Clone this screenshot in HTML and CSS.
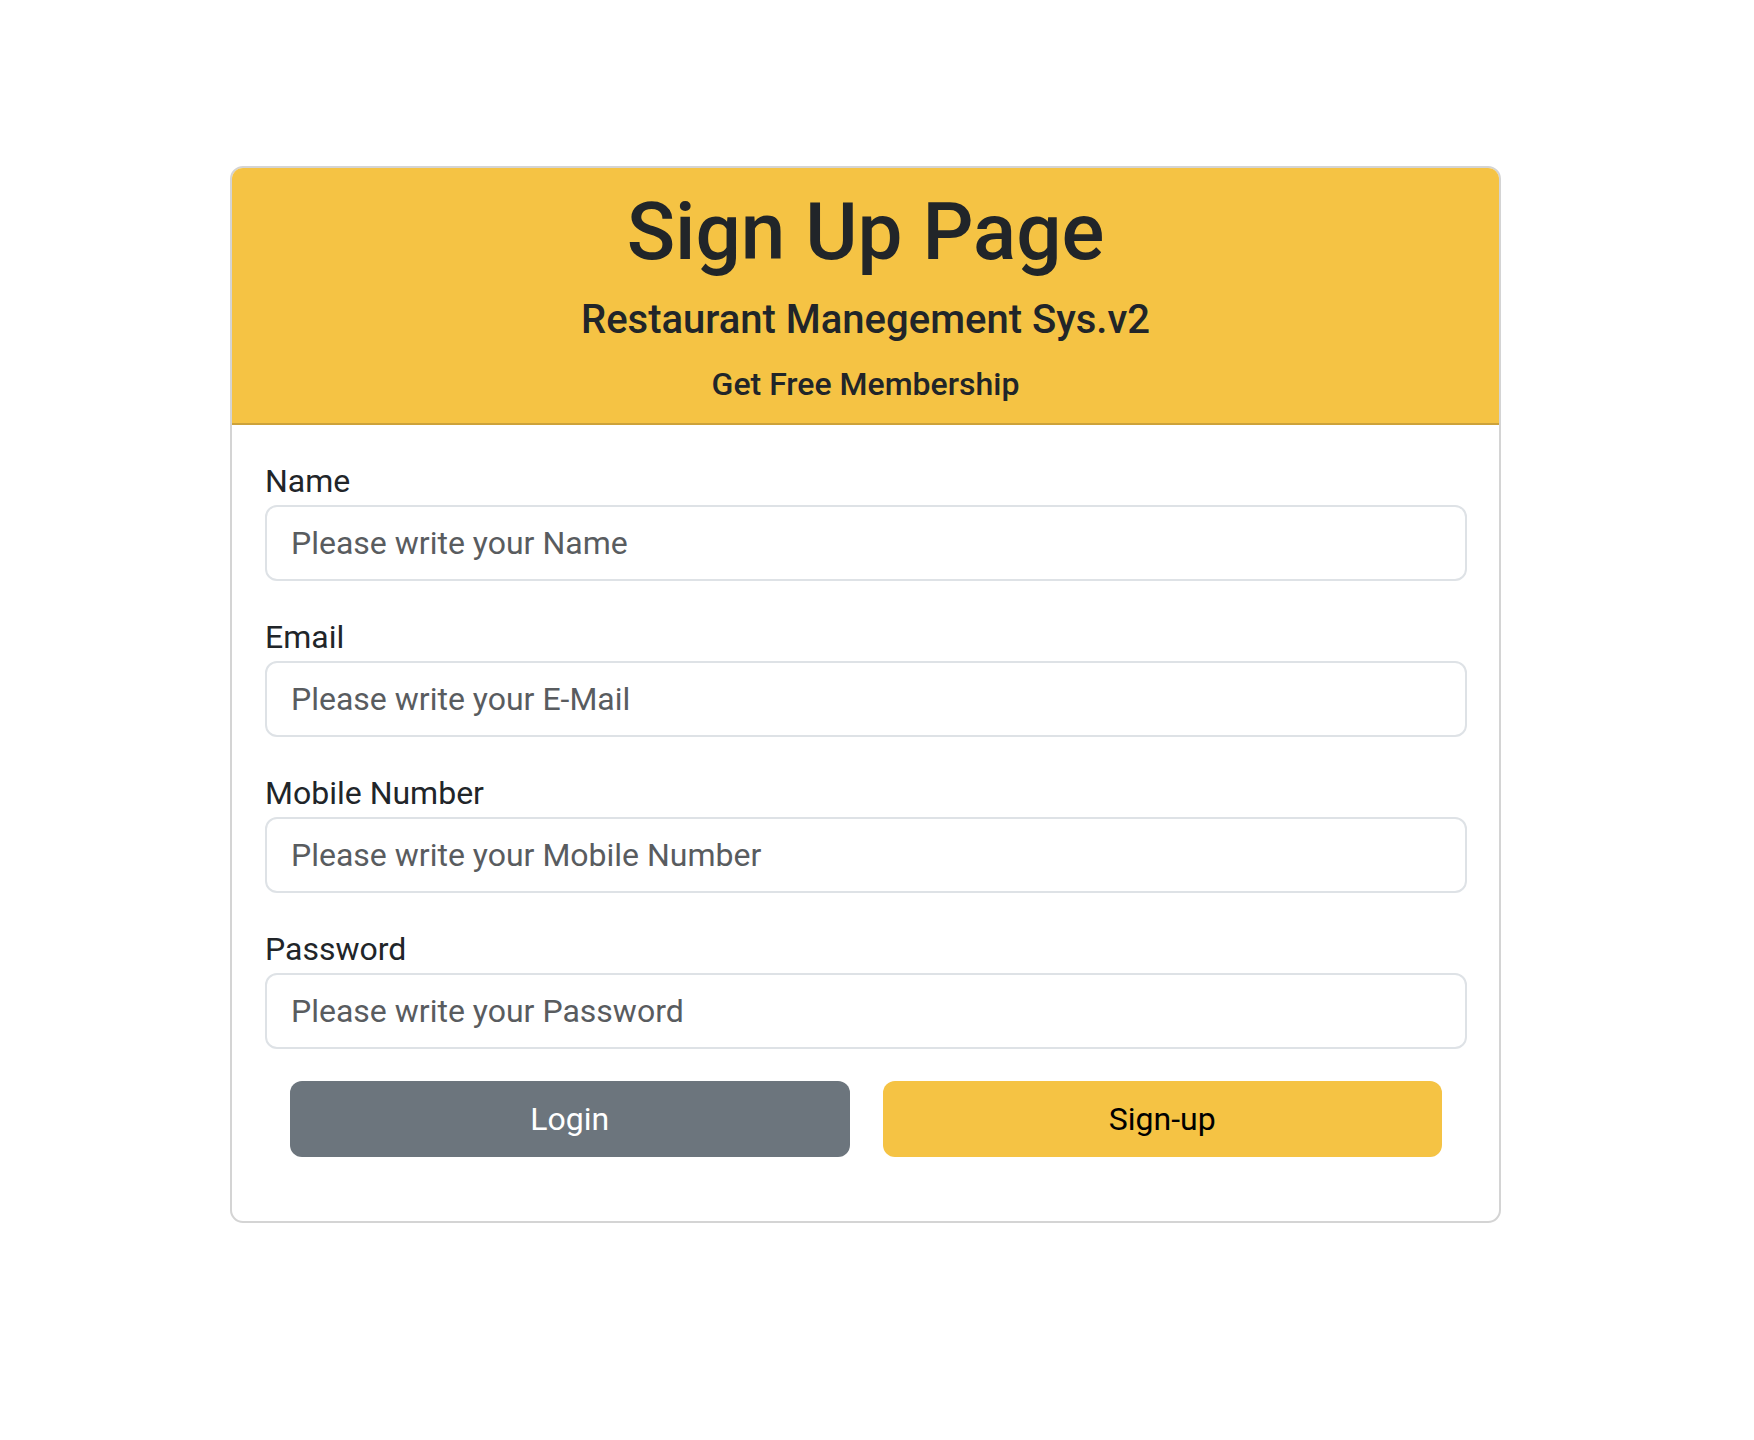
FILE: index.html
```html
<!DOCTYPE html>
<html lang="en">
<head>
<meta charset="utf-8">
<title>Sign Up Page</title>
<link rel="stylesheet" href="styles.css">
</head>
<body>
<div class="page">
  <div class="card">
    <div class="card-header">
      <h1 class="title">Sign Up Page</h1>
      <h5 class="subtitle">Restaurant Manegement Sys.v2</h5>
      <p class="tagline">Get Free Membership</p>
    </div>
    <form class="card-body">
      <div class="field">
        <label class="label" for="name">Name</label>
        <input class="control" id="name" type="text" placeholder="Please write your Name">
      </div>
      <div class="field">
        <label class="label" for="email">Email</label>
        <input class="control" id="email" type="email" placeholder="Please write your E-Mail">
      </div>
      <div class="field">
        <label class="label" for="mobile">Mobile Number</label>
        <input class="control" id="mobile" type="text" placeholder="Please write your Mobile Number">
      </div>
      <div class="field">
        <label class="label" for="password">Password</label>
        <input class="control" id="password" type="password" placeholder="Please write your Password">
      </div>
      <div class="actions">
        <button class="btn btn-login" type="button">Login</button>
        <button class="btn btn-signup" type="submit">Sign-up</button>
      </div>
    </form>
  </div>
</div>
</body>
</html>
```
FILE: styles.css
```css
* { box-sizing: border-box; }
html, body { margin: 0; padding: 0; background: #fff; }
body {
  font-family: Roboto, "Liberation Sans", Arial, sans-serif;
  color: #212529;
}
.page {
  padding: 166px 0 0 230px;
}
.card {
  width: 1271px;
  border: 2px solid #d4d4d4;
  border-radius: 13px;
  overflow: hidden;
}
.card-header {
  background: #f5c344;
  border-bottom: 2px solid #cda23a;
  padding: 16px 32px 17px;
  text-align: center;
}
.title {
  margin: 0 0 16px;
  font-size: 80px;
  line-height: 96px;
  font-weight: 500;
}
.subtitle {
  margin: 0 0 18px;
  font-size: 40px;
  line-height: 48px;
  font-weight: 500;
}
.tagline {
  margin: 0;
  font-size: 32px;
  line-height: 44px;
  font-weight: 500;
}
.card-body {
  display: flex;
  flex-direction: column;
  padding: 32px 32px 64px 33px;
}
.field {
  display: flex;
  flex-direction: column;
  margin-bottom: 32px;
}
.label {
  font-size: 32px;
  line-height: 48px;
  margin-bottom: 0;
  color: #212529;
}
.control {
  height: 76px;
  border: 2px solid #dee2e6;
  border-radius: 12px;
  padding: 0 24px;
  font-family: inherit;
  font-size: 32px;
  color: #212529;
  background: #fff;
  outline: none;
}
.control::placeholder {
  color: #595c5f;
  opacity: 1;
}
.actions {
  display: flex;
  gap: 33px;
  padding: 0 25px;
}
.btn {
  flex: 1;
  height: 76px;
  border: 2px solid transparent;
  border-radius: 12px;
  font-family: inherit;
  font-size: 32px;
  line-height: 48px;
  cursor: pointer;
}
.btn-login {
  background: #6c757d;
  color: #fff;
}
.btn-signup {
  background: #f5c344;
  color: #000;
}
```
